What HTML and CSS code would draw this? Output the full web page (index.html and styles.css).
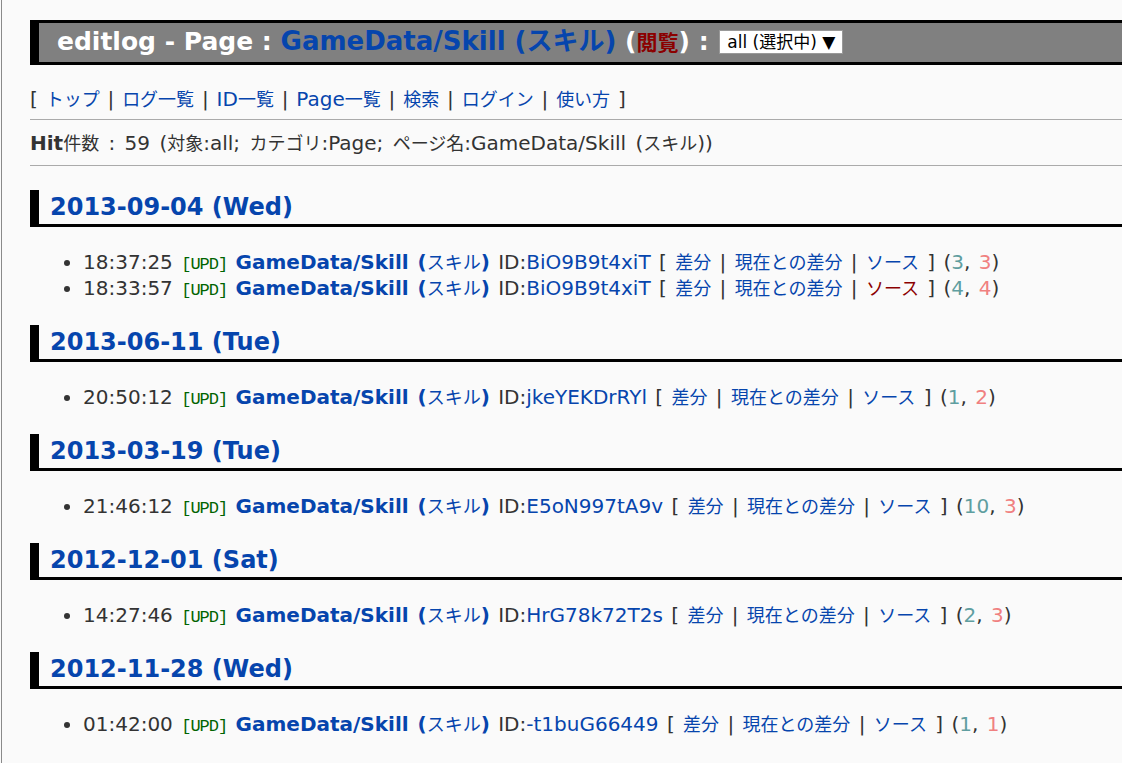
FILE: index.html
```html
<!DOCTYPE html>
<html lang="ja">
<head>
<meta charset="utf-8">
<title>editlog - Page : GameData/Skill (スキル)</title>
<link rel="stylesheet" href="styles.css">
</head>
<body>
<div class="page">
  <h1 class="title">editlog - Page : <a class="title-link" href="#">GameData/Skill (スキル)</a> (<a class="view-link" href="#">閲覧</a>) : <span class="select">all (<span class="j">選択中</span>) ▼</span></h1>

  <p class="nav">[ <a href="#"><span class="j">トップ</span></a> | <a href="#"><span class="j">ログ一覧</span></a> | <a href="#">ID<span class="j">一覧</span></a> | <a href="#">Page<span class="j">一覧</span></a> | <a href="#"><span class="j">検索</span></a> | <a href="#"><span class="j">ログイン</span></a> | <a href="#"><span class="j">使い方</span></a> ]</p>
  <hr class="rule">
  <p class="hit"><b>Hit</b><span class="j">件数</span> : 59 (<span class="j">対象</span>:all; <span class="j">カテゴリ</span>:Page; <span class="j">ページ名</span>:GameData/Skill (<span class="j">スキル</span>))</p>
  <hr class="rule">

  <h2 class="day"><a href="#">2013-09-04 (Wed)</a></h2>
  <ul class="log">
    <li>18:37:25 <span class="upd">[UPD]</span> <a class="page-link" href="#">GameData/Skill (<span class="j kana">スキル</span>)</a> ID:<a href="#">BiO9B9t4xiT</a> [ <a href="#"><span class="j">差分</span></a> | <a href="#"><span class="j">現在との差分</span></a> | <a href="#"><span class="j">ソース</span></a> ] (<span class="n1">3</span>, <span class="n2">3</span>)</li>
    <li>18:33:57 <span class="upd">[UPD]</span> <a class="page-link" href="#">GameData/Skill (<span class="j kana">スキル</span>)</a> ID:<a href="#">BiO9B9t4xiT</a> [ <a href="#"><span class="j">差分</span></a> | <a href="#"><span class="j">現在との差分</span></a> | <a class="visited" href="#"><span class="j">ソース</span></a> ] (<span class="n1">4</span>, <span class="n2">4</span>)</li>
  </ul>

  <h2 class="day"><a href="#">2013-06-11 (Tue)</a></h2>
  <ul class="log">
    <li>20:50:12 <span class="upd">[UPD]</span> <a class="page-link" href="#">GameData/Skill (<span class="j kana">スキル</span>)</a> ID:<a href="#">jkeYEKDrRYl</a> [ <a href="#"><span class="j">差分</span></a> | <a href="#"><span class="j">現在との差分</span></a> | <a href="#"><span class="j">ソース</span></a> ] (<span class="n1">1</span>, <span class="n2">2</span>)</li>
  </ul>

  <h2 class="day"><a href="#">2013-03-19 (Tue)</a></h2>
  <ul class="log">
    <li>21:46:12 <span class="upd">[UPD]</span> <a class="page-link" href="#">GameData/Skill (<span class="j kana">スキル</span>)</a> ID:<a href="#">E5oN997tA9v</a> [ <a href="#"><span class="j">差分</span></a> | <a href="#"><span class="j">現在との差分</span></a> | <a href="#"><span class="j">ソース</span></a> ] (<span class="n1">10</span>, <span class="n2">3</span>)</li>
  </ul>

  <h2 class="day"><a href="#">2012-12-01 (Sat)</a></h2>
  <ul class="log">
    <li>14:27:46 <span class="upd">[UPD]</span> <a class="page-link" href="#">GameData/Skill (<span class="j kana">スキル</span>)</a> ID:<a href="#">HrG78k72T2s</a> [ <a href="#"><span class="j">差分</span></a> | <a href="#"><span class="j">現在との差分</span></a> | <a href="#"><span class="j">ソース</span></a> ] (<span class="n1">2</span>, <span class="n2">3</span>)</li>
  </ul>

  <h2 class="day"><a href="#">2012-11-28 (Wed)</a></h2>
  <ul class="log">
    <li>01:42:00 <span class="upd">[UPD]</span> <a class="page-link" href="#">GameData/Skill (<span class="j kana">スキル</span>)</a> ID:<a href="#">-t1buG66449</a> [ <a href="#"><span class="j">差分</span></a> | <a href="#"><span class="j">現在との差分</span></a> | <a href="#"><span class="j">ソース</span></a> ] (<span class="n1">1</span>, <span class="n2">1</span>)</li>
  </ul>
</div>
</body>
</html>
```

FILE: styles.css
```css
html, body {
  margin: 0;
  padding: 0;
  background: #fafafa;
}

body {
  font-family: "DejaVu Sans", "Noto Sans CJK JP", sans-serif;
  color: #333;
  font-size: 20px;
}

a {
  color: #0645ad;
  text-decoration: none;
}

.j {
  font-size: 0.9em;
  line-height: 1;
}

.page {
  margin-left: 1px;
  border-left: 1px solid #8a8a8a;
  padding: 20px 0 0 28px;
  min-height: 743px;
  overflow: hidden;
}

.title {
  margin: 0;
  background: #808080;
  border-top: 3px solid #000;
  border-bottom: 3px solid #000;
  border-left: 9px solid #000;
  padding: 0 0 3px 18px;
  height: 36px;
  line-height: 36px;
  font-size: 25px;
  font-weight: bold;
  color: #fff;
  white-space: nowrap;
}

.title-link {
  color: #0645ad;
  font-size: 26px;
}

.view-link {
  color: #8b0000;
  font-size: 21px;
}

.select {
  display: inline-block;
  vertical-align: middle;
  background: #fff;
  border: 1px solid #999;
  color: #000;
  font-weight: normal;
  font-size: 17px;
  line-height: 22px;
  padding: 0 7px 0 7px;
  margin: -3px 0 0 2px;
}

.select .j {
  font-size: 1em;
}

.nav {
  margin: 22px 0 0;
  line-height: 24px;
  word-spacing: 1.5px;
}

.rule {
  margin: 8px 0 0;
  border: 0;
  border-top: 1px solid #aaa;
  height: 0;
}

.hit {
  margin: 11px 0 0;
  line-height: 24px;
  word-spacing: 3px;
}

.hit + .rule {
  margin-top: 10px;
}

.day {
  margin: 24px 0 0;
  border-left: 9px solid #000;
  border-bottom: 3px solid #000;
  padding: 0 0 0 11px;
  font-size: 24px;
  line-height: 34px;
  font-weight: bold;
}

.log {
  margin: 22px 0 0;
  padding-left: 53px;
  line-height: 26px;
}

.log li {
  white-space: nowrap;
  word-spacing: 2px;
}

.upd {
  font-family: "Liberation Mono", monospace;
  font-size: 17px;
  letter-spacing: -1px;
  line-height: 1;
  color: #006400;
}

.page-link {
  font-weight: bold;
}

.kana {
  font-weight: normal;
}

.visited {
  color: #8b0000;
}

.n1 {
  color: #5f9ea0;
}

.n2 {
  color: #f08080;
}
```
